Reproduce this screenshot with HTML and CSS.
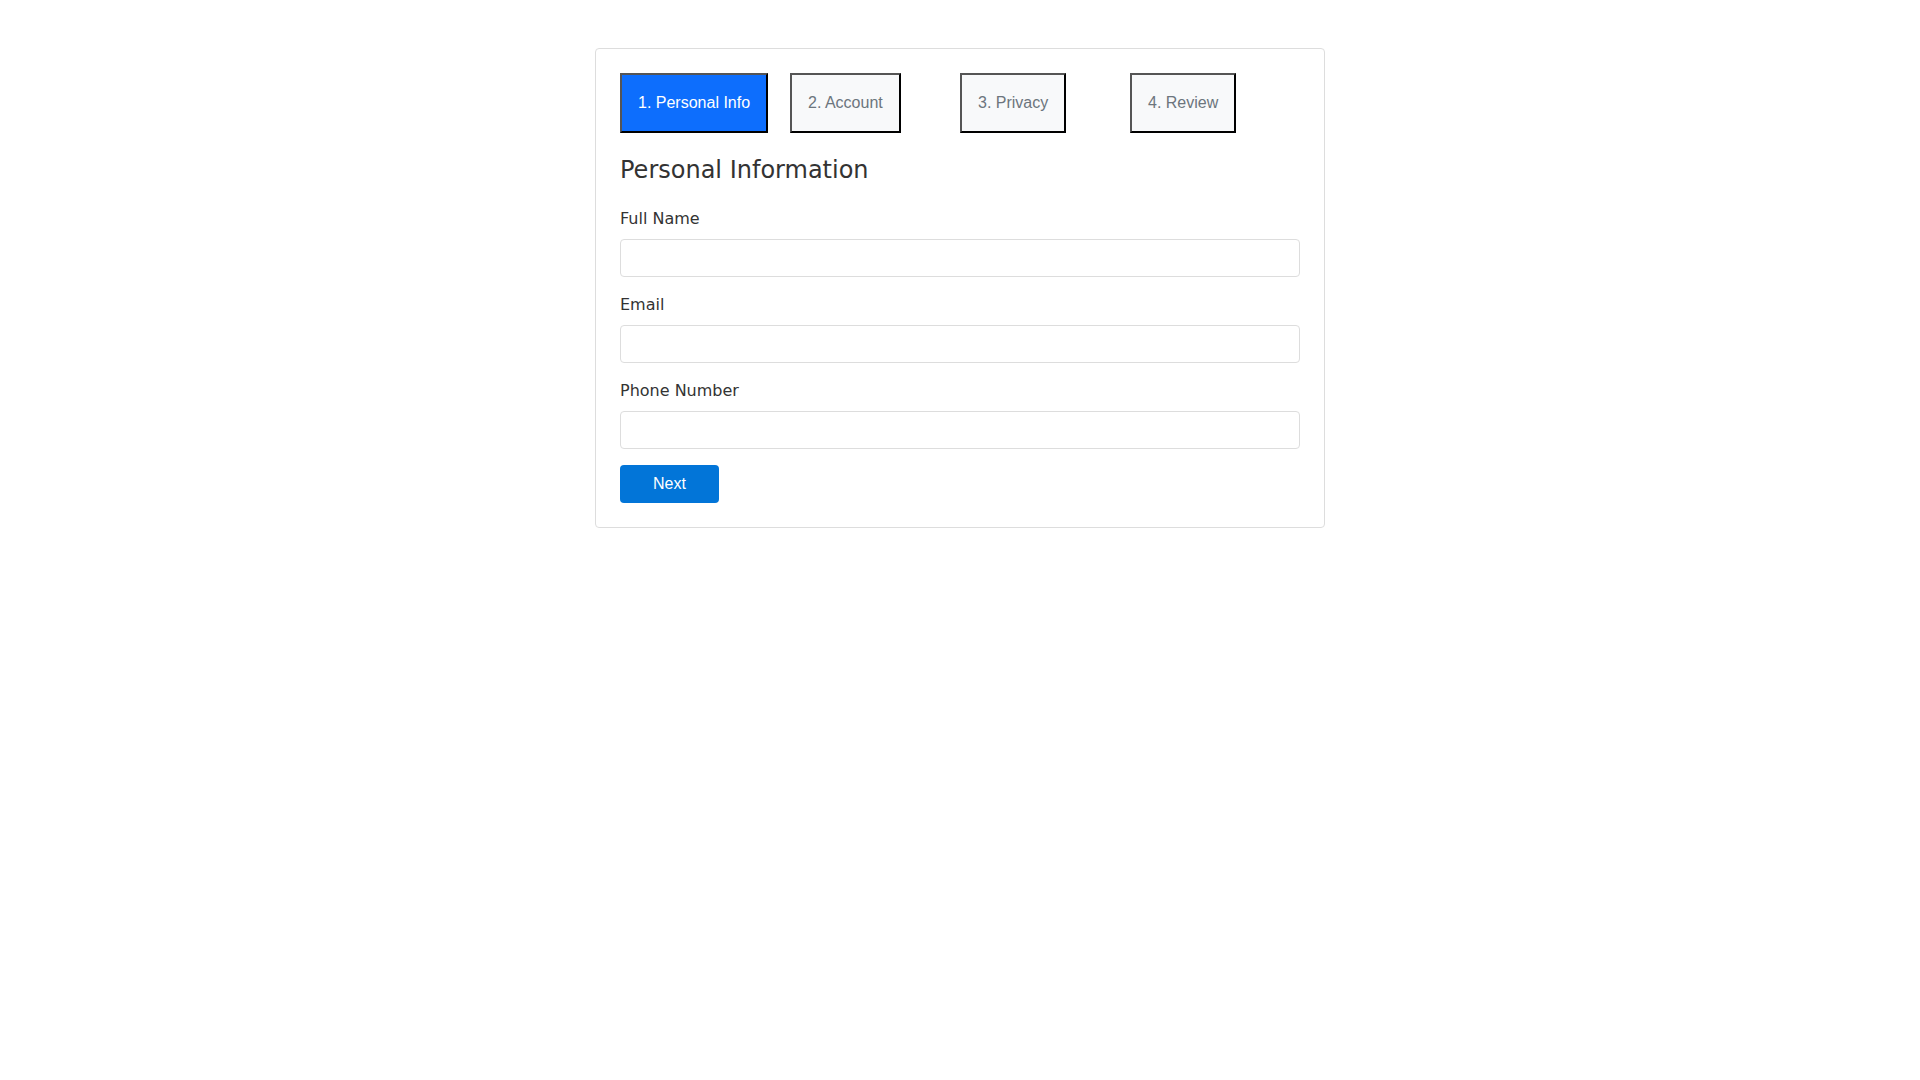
FILE: index.html
```html
<!DOCTYPE html>
<html lang="en">
<head>
    <meta charset="UTF-8">
    <meta name="viewport" content="width=device-width, initial-scale=1.0">
    <title>Registration</title>
    <link rel="stylesheet" href="styles.css">
</head>
<body>

    <div class="wizard">
        <div class="steps">
            <div class="step-cell"><button class="step active">1. Personal Info</button></div>
            <div class="step-cell"><button class="step">2. Account</button></div>
            <div class="step-cell"><button class="step">3. Privacy</button></div>
            <div class="step-cell"><button class="step">4. Review</button></div>
        </div>

        <h4>Personal Information</h4>
        <form>
            <div class="form-group">
                <label for="fullName">Full Name</label>
                <input type="text" id="fullName">
            </div>
            <div class="form-group">
                <label for="email">Email</label>
                <input type="email" id="email">
            </div>
            <div class="form-group">
                <label for="phone">Phone Number</label>
                <input type="tel" id="phone">
            </div>
            <button type="button" class="btn-next">Next</button>
        </form>
    </div>

</body>
</html>
```

FILE: styles.css
```css
body {
    font-family: "DejaVu Sans", sans-serif;
    color: #333333;
    margin: 0;
    padding-top: 48px;
}
.wizard {
    width: 730px;
    box-sizing: border-box;
    margin: 0 auto;
    padding: 24px;
    border: 1px solid #dddddd;
    border-radius: 4px;
}
.steps {
    display: grid;
    grid-template-columns: repeat(4, 1fr);
    margin-bottom: 23px;
}
.step-cell {
    display: flex;
}
.step {
    font-family: "Liberation Sans", Arial, sans-serif;
    font-size: 16px;
    height: 60px;
    padding: 0 16px;
    background-color: #f8f9fa;
    color: #6c757d;
    border-width: 2px;
    border-style: solid;
    border-color: #555555 #000000 #000000 #555555;
}
.step.active {
    background-color: #0d6efd;
    color: white;
}
h4 {
    font-size: 24px;
    font-weight: 500;
    line-height: 1.2;
    margin: 0 0 22px;
}
.form-group {
    margin-bottom: 16px;
}
label {
    display: block;
    font-size: 16px;
    line-height: 24px;
    margin-bottom: 8px;
}
input {
    display: block;
    width: 100%;
    height: 38px;
    box-sizing: border-box;
    border: 1px solid #dddddd;
    border-radius: 4px;
    padding: 6px 12px;
    font-size: 16px;
}
.btn-next {
    font-family: "Liberation Sans", Arial, sans-serif;
    font-size: 16px;
    height: 38px;
    width: 99px;
    background-color: #0275d8;
    color: white;
    border: none;
    border-radius: 4px;
}
```
